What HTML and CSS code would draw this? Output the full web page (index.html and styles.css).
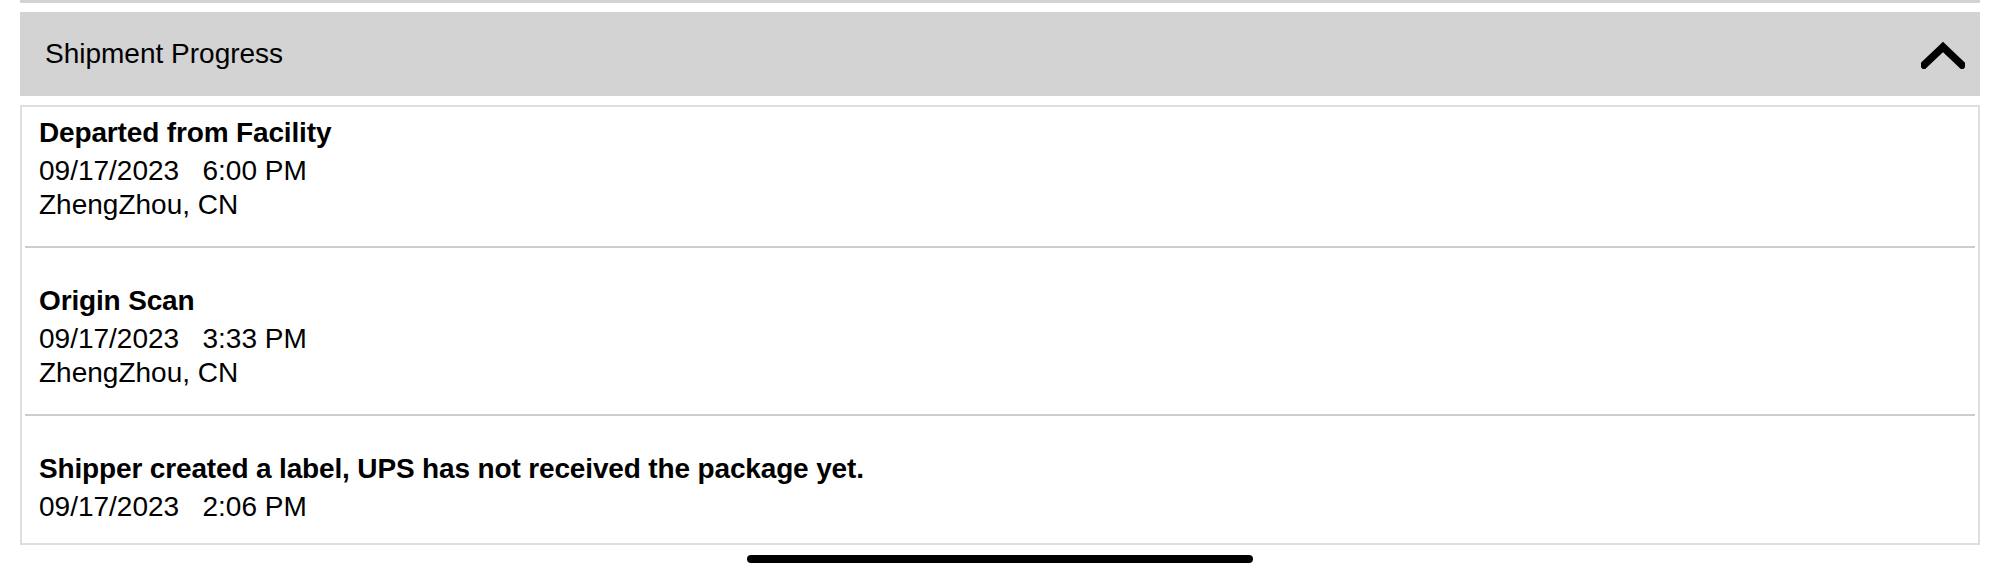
FILE: index.html
```html
<!DOCTYPE html>
<html lang="en">
<head>
<meta charset="utf-8">
<title>Shipment Progress</title>
<link rel="stylesheet" href="styles.css">
</head>
<body>
<div class="page">
  <div class="prev-bar"></div>
  <div class="section-header">
    <span class="section-title">Shipment Progress</span>
    <svg class="chevron" width="44" height="28" viewBox="0 0 44 28" aria-hidden="true">
      <polyline points="3,24 22,6 41,24" fill="none" stroke="#000" stroke-width="7.5" stroke-linecap="square" stroke-linejoin="miter"/>
    </svg>
  </div>
  <div class="card">
    <div class="event first">
      <div class="event-title">Departed from Facility</div>
      <div class="event-line">09/17/2023&nbsp;&nbsp;&nbsp;6:00 PM</div>
      <div class="event-line">ZhengZhou, CN</div>
    </div>
    <div class="event">
      <div class="event-title">Origin Scan</div>
      <div class="event-line">09/17/2023&nbsp;&nbsp;&nbsp;3:33 PM</div>
      <div class="event-line">ZhengZhou, CN</div>
    </div>
    <div class="event last">
      <div class="event-title">Shipper created a label, UPS has not received the package yet.</div>
      <div class="event-line">09/17/2023&nbsp;&nbsp;&nbsp;2:06 PM</div>
    </div>
  </div>
  <div class="home-indicator"></div>
</div>
</body>
</html>
```
FILE: styles.css
```css
html, body {
  margin: 0;
  padding: 0;
  background: #ffffff;
}

body {
  font-family: "Liberation Sans", Arial, sans-serif;
  color: #000;
}

.page {
  padding: 0 20px;
  display: flex;
  flex-direction: column;
}

.prev-bar {
  height: 3px;
  background: #d3d3d3;
}

.section-header {
  margin-top: 9px;
  height: 84px;
  background: #d3d3d3;
  display: flex;
  align-items: center;
  justify-content: space-between;
  padding: 0 15px 0 25px;
}

.section-title {
  font-size: 28px;
  line-height: 34px;
}

.chevron {
  display: block;
  margin-top: 2px;
}

.card {
  margin-top: 9px;
  border: 2px solid #dedede;
  display: flex;
  flex-direction: column;
}

.event {
  margin: 0 3px;
  padding: 36px 14px 24px;
  border-bottom: 2px solid #cfcdc9;
}

.event.first {
  padding-top: 9px;
}

.event.last {
  border-bottom: none;
  padding-top: 36px;
  padding-bottom: 19px;
}

.event-title {
  font-weight: bold;
  font-size: 28px;
  line-height: 34px;
  margin-bottom: 4px;
  letter-spacing: -0.15px;
}

.event-line {
  font-size: 28px;
  line-height: 34px;
}

.home-indicator {
  align-self: center;
  margin-top: 10px;
  width: 506px;
  height: 8px;
  border-radius: 4px;
  background: #000;
}
```
